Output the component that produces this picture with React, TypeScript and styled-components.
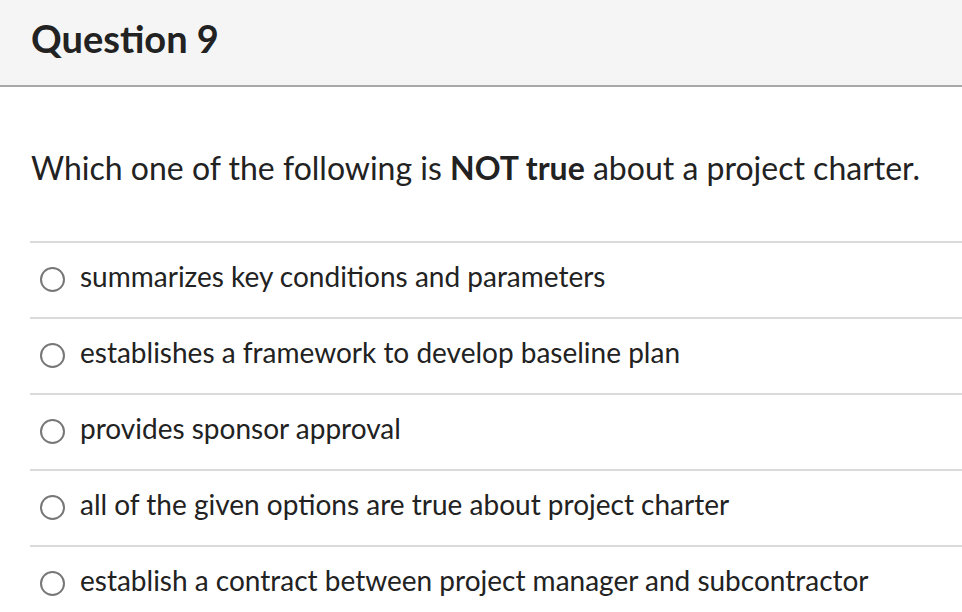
import styled, { createGlobalStyle } from "styled-components";

const GlobalStyle = createGlobalStyle`
  html, body {
    margin: 0;
    padding: 0;
    background: #ffffff;
  }
  body {
    font-family: Lato, "Noto Sans", sans-serif;
    color: #2d2d2d;
  }
`;

const Page = styled.div`
  width: 962px;
  height: 612px;
  overflow: hidden;
`;

const Header = styled.header`
  height: 87px;
  background: #f5f5f5;
  border-bottom: 2px solid #a8a8a8;
  padding: 14px 0 0 31px;
  box-sizing: border-box;
`;

const Title = styled.h2`
  margin: 0;
  font-size: 38px;
  line-height: 48px;
  font-weight: 700;
  color: #222;
`;

const Body = styled.div`
  padding-left: 30px;
`;

const QuestionText = styled.p`
  margin: 0;
  padding: 61px 0 0 1px;
  height: 93px;
  font-size: 32px;
  line-height: 40px;
  color: #222;
  b {
    font-weight: 700;
  }
`;

const Answers = styled.fieldset`
  border: none;
  margin: 0;
  padding: 0;
`;

const Answer = styled.label`
  display: flex;
  align-items: center;
  gap: 15px;
  height: 76px;
  border-top: 2px solid #dadada;
  box-sizing: border-box;
  padding: 0 0 8px 10px;
  font-size: 28px;
  color: #222;
  cursor: pointer;
`;

const Radio = styled.span`
  width: 25px;
  height: 25px;
  margin-top: 6px;
  border: 2px solid #777;
  border-radius: 50%;
  box-sizing: border-box;
  flex-shrink: 0;
  background: #fff;
`;

const options = [
  "summarizes key conditions and parameters",
  "establishes a framework to develop baseline plan",
  "provides sponsor approval",
  "all of the given options are true about project charter",
  "establish a contract between project manager and subcontractor",
];

export default function App() {
  return (
    <Page>
      <GlobalStyle />
      <Header>
        <Title>Question 9</Title>
      </Header>
      <Body>
        <QuestionText>
          Which one of the following is <b>NOT true</b> about a project charter.
        </QuestionText>
        <Answers>
          {options.map((o) => (
            <Answer key={o}>
              <Radio />
              <span>{o}</span>
            </Answer>
          ))}
        </Answers>
      </Body>
    </Page>
  );
}
